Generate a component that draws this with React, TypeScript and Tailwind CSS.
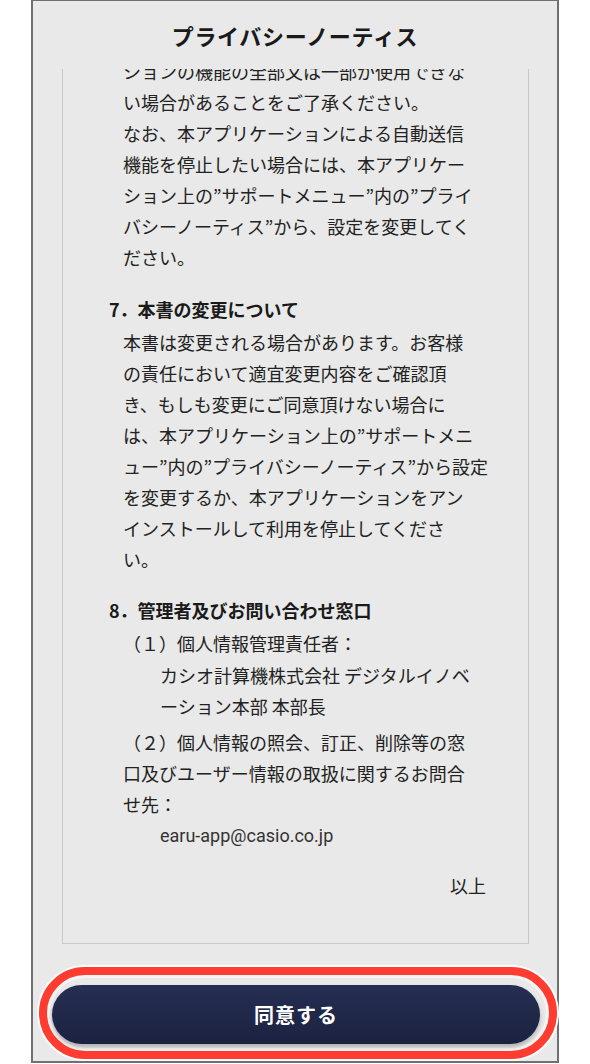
const jp = { fontFamily: '"Noto Sans CJK JP", "Noto Sans", sans-serif' };

const sectionTail = [
  "ションの機能の全部又は一部が使用できな",
  "い場合があることをご了承ください。",
  "なお、本アプリケーションによる自動送信",
  "機能を停止したい場合には、本アプリケー",
  "ション上の”サポートメニュー”内の”プライ",
  "バシーノーティス”から、設定を変更してく",
  "ださい。",
];

const changeBody = [
  "本書は変更される場合があります。お客様",
  "の責任において適宜変更内容をご確認頂",
  "き、もしも変更にご同意頂けない場合に",
  "は、本アプリケーション上の”サポートメニ",
  "ュー”内の”プライバシーノーティス”から設定",
  "を変更するか、本アプリケーションをアン",
  "インストールして利用を停止してくださ",
  "い。",
];

function Lines({ lines, className = "" }: { lines: string[]; className?: string }) {
  return (
    <div className={className}>
      {lines.map((l, i) => (
        <div key={i} className="whitespace-nowrap">
          {l}
        </div>
      ))}
    </div>
  );
}

export default function App() {
  return (
    <div className="w-[590px] h-[1064px] bg-white overflow-hidden [text-spacing-trim:space-all]" style={jp}>
      <div className="ml-[31px] w-[528px] h-[1063px] border-x-2 border-t border-b-2 border-[#707070] bg-[#e8e9e8] flex flex-col">
        <div className="h-[68px] flex items-center justify-center text-[22px] font-bold text-[#1a1a1a] tracking-[0.7px]">
          プライバシーノーティス
        </div>

        <div className="ml-[29px] w-[467px] h-[875px] border-x border-b border-[#c9c9c9] overflow-hidden">
          <div className="-mt-[13px] text-[18px] leading-[31px] text-[#222]">
            <Lines lines={sectionTail} className="pl-[60px]" />

            <div className="mt-[21px] pl-[46px] font-bold text-[#1a1a1a] whitespace-nowrap">
              7．本書の変更について
            </div>
            <Lines lines={changeBody} className="pl-[60px] mt-[2px]" />

            <div className="mt-[20px] pl-[46px] font-bold text-[#1a1a1a] whitespace-nowrap">
              8．管理者及びお問い合わせ窓口
            </div>
            <div className="pl-[60px] mt-[2px]">
              <div className="whitespace-nowrap">（１）個人情報管理責任者：</div>
              <div className="pl-[37px] mt-[1px]">
                <div className="whitespace-nowrap">カシオ計算機株式会社 デジタルイノベ</div>
                <div className="whitespace-nowrap">ーション本部 本部長</div>
              </div>
              <div className="mt-[5px] whitespace-nowrap">（２）個人情報の照会、訂正、削除等の窓</div>
              <div className="whitespace-nowrap">口及びユーザー情報の取扱に関するお問合</div>
              <div className="whitespace-nowrap">せ先：</div>
              <div
                className="pl-[37px] text-[18px] text-[#333] whitespace-nowrap"
                style={{ fontFamily: 'Roboto, "Noto Sans", sans-serif' }}
              >
                earu-app@casio.co.jp
              </div>
            </div>

            <div className="mt-[19px] pr-[42px] text-right">以上</div>
          </div>
        </div>

        <div className="relative mt-[41px] ml-[19px] w-[488px] h-[59px]">
          <div className="absolute -left-[13px] -right-[17px] -top-[18px] -bottom-[15px] rounded-full border-[8px] border-[#fe3c2f] shadow-[0_0_0_2px_#ffffff,inset_0_0_0_3px_#f4f4f4]" />
          <button className="relative w-full h-full rounded-full bg-gradient-to-b from-[#262e53] to-[#1b2240] text-white text-[20px] font-bold shadow-[0_3px_4px_rgba(0,0,0,0.25)] tracking-[1px]">
            同意する
          </button>
        </div>
      </div>
    </div>
  );
}
